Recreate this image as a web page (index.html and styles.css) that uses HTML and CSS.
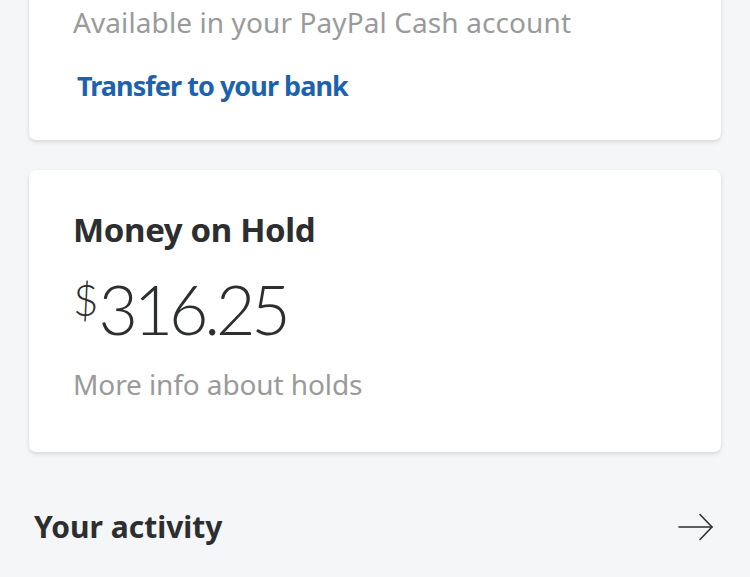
FILE: index.html
```html
<!DOCTYPE html>
<html>
<head>
<meta charset="utf-8">
<link rel="stylesheet" href="styles.css">
</head>
<body>
<div class="page">
  <section class="card card-cash">
    <p class="sub">Available in your PayPal Cash account</p>
    <a class="link" href="#">Transfer to your bank</a>
  </section>
  <section class="card card-hold">
    <h2 class="title">Money on Hold</h2>
    <div class="amount"><span class="cur">$</span>316.25</div>
    <p class="sub">More info about holds</p>
  </section>
  <div class="activity">
    <h2 class="activity-title">Your activity</h2>
    <svg class="arrow" width="36" height="28" viewBox="0 0 36 28" fill="none" stroke="#2c2e2f" stroke-width="1.6" stroke-linecap="round" stroke-linejoin="round">
      <path d="M1 14 H34"/>
      <path d="M22 1.5 L34 14 L22 26.5"/>
    </svg>
  </div>
</div>
</body>
</html>
```
FILE: styles.css
```css
* { box-sizing: border-box; }
html, body { margin: 0; padding: 0; }
body {
  background: #f5f6f8;
  font-family: "Noto Sans", "Open Sans", sans-serif;
  color: #2c2e2f;
  width: 750px;
  height: 577px;
  overflow: hidden;
}
.page {
  padding: 0 29px;
}
.card {
  background: #ffffff;
  border-radius: 7px;
  box-shadow: 0 2px 4px rgba(0, 0, 0, 0.13);
  padding: 0 44px;
}
.card-cash {
  margin-top: -40px;
  padding-top: 40px;
  height: 180px;
  display: flex;
  flex-direction: column;
}
.sub {
  margin: 0;
  font-size: 28px;
  line-height: 40px;
  color: #9a9a9a;
  letter-spacing: 0.1px;
}
.card-cash .sub {
  margin-top: 2px;
}
.link {
  display: block;
  margin-top: 24px;
  margin-left: 4px;
  font-size: 27px;
  line-height: 40px;
  font-weight: 700;
  color: #1d62ad;
  text-decoration: none;
  letter-spacing: -0.95px;
}
.card-hold {
  margin-top: 30px;
  height: 282px;
  padding-top: 38px;
}
.title {
  margin: 0;
  font-size: 33px;
  line-height: 44px;
  font-weight: 700;
  letter-spacing: -0.35px;
}
.amount {
  margin-top: 22px;
  font-family: "Lato", "Noto Sans", sans-serif;
  font-weight: 300;
  font-size: 68px;
  line-height: 70px;
  letter-spacing: -4.2px;
  display: flex;
  align-items: flex-start;
}
.cur {
  font-size: 44px;
  line-height: 44px;
  margin-top: 3px;
  margin-right: 0;
  letter-spacing: 0;
}
.card-hold .sub {
  margin-top: 20px;
  letter-spacing: -0.1px;
}
.activity {
  display: flex;
  align-items: center;
  justify-content: space-between;
  padding: 0 7px 0 5px;
  margin-top: 55px;
}
.activity-title {
  margin: 0;
  font-size: 30px;
  line-height: 40px;
  font-weight: 700;
  letter-spacing: 0;
}
.arrow { display: block; }
```
